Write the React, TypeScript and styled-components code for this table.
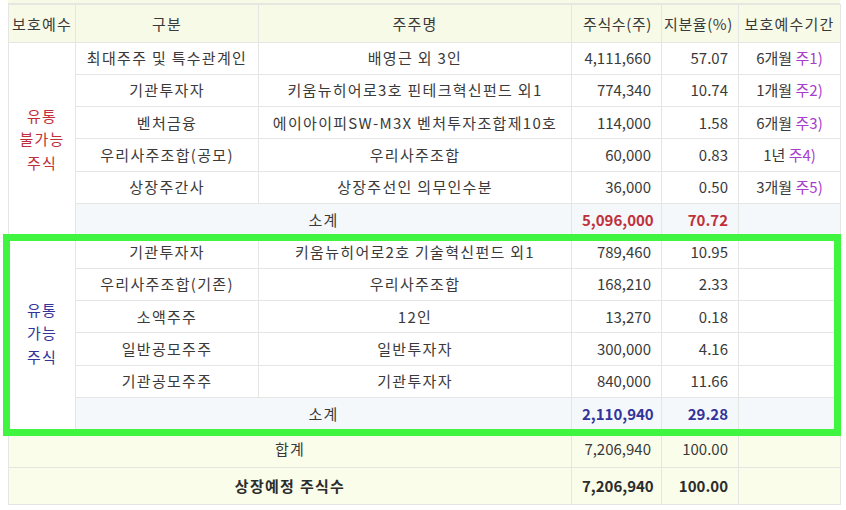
import styled, { createGlobalStyle } from "styled-components";

const GlobalStyle = createGlobalStyle`
  body {
    margin: 0;
    background: #ffffff;
    font-family: "Noto Sans CJK KR", "Noto Sans", sans-serif;
  }
`;

const Wrap = styled.div`
  position: relative;
  width: 846px;
  height: 510px;
  padding: 0 6px 0 8px;
  box-sizing: border-box;
  overflow: hidden;
`;

const TopEdge = styled.div`
  height: 3px;
  background: #f7fae6;
  border-bottom: 1px solid #e6e8dc;
`;

const Table = styled.table`
  width: 832px;
  table-layout: fixed;
  border-collapse: collapse;
  font-size: 15px;
  color: #3a3a3a;
`;

type Tone = "head" | "body" | "sub" | "total";

const bgFor = (tone: Tone) =>
  tone === "head" ? "#f7fae6" : tone === "sub" ? "#f5f8fa" : tone === "total" ? "#fafdea" : "#ffffff";

const Row = styled.tr<{ $tall?: boolean }>`
  height: ${(p) => (p.$tall ? "37.5px" : "32.33px")};
`;

const Cell = styled.td<{ $tone?: Tone; $align?: "left" | "center" | "right"; $wide?: boolean }>`
  border: 1px solid #e4e6e4;
  background: ${(p) => bgFor(p.$tone ?? "body")};
  text-align: ${(p) => p.$align ?? "center"};
  letter-spacing: ${(p) => (p.$wide ? "1.3px" : "0")};
  padding: 0 10px;
  white-space: nowrap;
  overflow: hidden;
  vertical-align: middle;
  line-height: 20px;
`;

const HeadCell = styled.th`
  border: 1px solid #e4e6e4;
  background: #f7fae6;
  font-weight: 400;
  letter-spacing: 1.2px;
  padding: 0 2px;
  white-space: nowrap;
  text-align: center;
  &:nth-child(4),
  &:nth-child(5) {
    text-align: right;
    padding-right: 9px;
    letter-spacing: 0.6px;
  }
`;

const GroupLabel = styled.td<{ $color: string }>`
  border: 1px solid #e4e6e4;
  background: #ffffff;
  color: ${(p) => p.$color};
  text-align: center;
  letter-spacing: 1.2px;
  line-height: 23.5px;
  vertical-align: middle;
  padding: 0;
`;

const Strong = styled.span<{ $color?: string }>`
  font-weight: 700;
  color: ${(p) => p.$color ?? "#2c2c2c"};
`;

const Note = styled.span`
  color: #a63dcc;
`;

const Highlight = styled.div`
  position: absolute;
  left: 3px;
  top: 234px;
  width: 838px;
  height: 202px;
  border: 7px solid #3ff53f;
  box-sizing: border-box;
  pointer-events: none;
`;

type Item = { kind: string; holder: string; shares: string; ratio: string; period?: string; note?: string };

const locked: Item[] = [
  { kind: "최대주주 및 특수관계인", holder: "배영근 외 3인", shares: "4,111,660", ratio: "57.07", period: "6개월", note: "주1)" },
  { kind: "기관투자자", holder: "키움뉴히어로3호 핀테크혁신펀드 외1", shares: "774,340", ratio: "10.74", period: "1개월", note: "주2)" },
  { kind: "벤처금융", holder: "에이아이피SW-M3X 벤처투자조합제10호", shares: "114,000", ratio: "1.58", period: "6개월", note: "주3)" },
  { kind: "우리사주조합(공모)", holder: "우리사주조합", shares: "60,000", ratio: "0.83", period: "1년", note: "주4)" },
  { kind: "상장주간사", holder: "상장주선인 의무인수분", shares: "36,000", ratio: "0.50", period: "3개월", note: "주5)" },
];

const free: Item[] = [
  { kind: "기관투자자", holder: "키움뉴히어로2호 기술혁신펀드 외1", shares: "789,460", ratio: "10.95" },
  { kind: "우리사주조합(기존)", holder: "우리사주조합", shares: "168,210", ratio: "2.33" },
  { kind: "소액주주", holder: "12인", shares: "13,270", ratio: "0.18" },
  { kind: "일반공모주주", holder: "일반투자자", shares: "300,000", ratio: "4.16" },
  { kind: "기관공모주주", holder: "기관투자자", shares: "840,000", ratio: "11.66" },
];

const Group = ({ label, color, items, sumShares, sumRatio }: { label: string[]; color: string; items: Item[]; sumShares: string; sumRatio: string }) => (
  <>
    {items.map((it, i) => (
      <Row key={it.kind + i}>
        {i === 0 && (
          <GroupLabel $color={color} rowSpan={items.length + 1}>
            {label.map((l) => (
              <div key={l}>{l}</div>
            ))}
          </GroupLabel>
        )}
        <Cell $wide>{it.kind}</Cell>
        <Cell $wide>{it.holder}</Cell>
        <Cell $align="right">{it.shares}</Cell>
        <Cell $align="right">{it.ratio}</Cell>
        <Cell>
          {it.period && (
            <>
              {it.period} <Note>{it.note}</Note>
            </>
          )}
        </Cell>
      </Row>
    ))}
    <Row>
      <Cell $tone="sub" $wide colSpan={2}>소계</Cell>
      <Cell $tone="sub" $align="right"><Strong $color={color}>{sumShares}</Strong></Cell>
      <Cell $tone="sub" $align="right"><Strong $color={color}>{sumRatio}</Strong></Cell>
      <Cell $tone="sub" />
    </Row>
  </>
);

export default function App() {
  return (
    <Wrap>
      <GlobalStyle />
      <TopEdge />
      <Table>
        <colgroup>
          <col style={{ width: 67 }} />
          <col style={{ width: 183 }} />
          <col style={{ width: 313 }} />
          <col style={{ width: 90 }} />
          <col style={{ width: 77 }} />
          <col style={{ width: 102 }} />
        </colgroup>
        <thead>
          <Row $tall>
            <HeadCell>보호예수</HeadCell>
            <HeadCell>구분</HeadCell>
            <HeadCell>주주명</HeadCell>
            <HeadCell>주식수(주)</HeadCell>
            <HeadCell>지분율(%)</HeadCell>
            <HeadCell>보호예수기간</HeadCell>
          </Row>
        </thead>
        <tbody>
          <Group label={["유통", "불가능", "주식"]} color="#c0303a" items={locked} sumShares="5,096,000" sumRatio="70.72" />
          <Group label={["유통", "가능", "주식"]} color="#33339a" items={free} sumShares="2,110,940" sumRatio="29.28" />
          <Row $tall>
            <Cell $tone="total" $wide colSpan={3}>합계</Cell>
            <Cell $tone="total" $align="right">7,206,940</Cell>
            <Cell $tone="total" $align="right">100.00</Cell>
            <Cell $tone="total" />
          </Row>
          <Row $tall>
            <Cell $tone="total" $wide colSpan={3}><Strong>상장예정 주식수</Strong></Cell>
            <Cell $tone="total" $align="right"><Strong>7,206,940</Strong></Cell>
            <Cell $tone="total" $align="right"><Strong>100.00</Strong></Cell>
            <Cell $tone="total" />
          </Row>
        </tbody>
      </Table>
      <Highlight />
    </Wrap>
  );
}
